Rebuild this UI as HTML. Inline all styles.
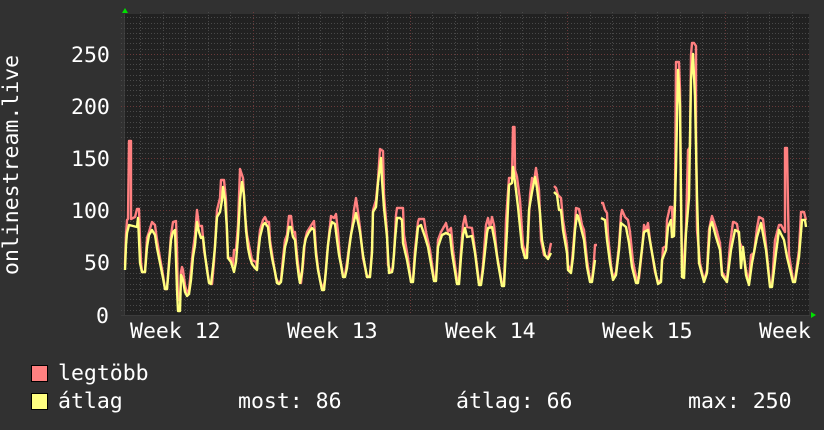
<!DOCTYPE html>
<html>
<head>
<meta charset="utf-8">
<style>
html,body{margin:0;padding:0;background:#313131;}
svg{display:block;}
text{font-family:"DejaVu Sans Mono","Liberation Mono",monospace;font-size:21.5px;fill:#fff;}
</style>
</head>
<body>
<svg width="824" height="430" viewBox="0 0 824 430" xmlns="http://www.w3.org/2000/svg">
<rect width="824" height="430" fill="#313131"/>
<rect x="125" y="14" width="684" height="302" fill="#212121"/>
<rect x="124" y="14" width="1" height="302" fill="#3a3a3a"/>
<g fill="none" stroke-width="1" stroke-dasharray="1 2">
<path stroke="#494949" d="M121 310.5H809M121 305.5H809M121 299.5H809M121 294.5H809M121 289.5H809M121 284.5H809M121 278.5H809M121 273.5H809M121 268.5H809M121 258.5H809M121 252.5H809M121 247.5H809M121 242.5H809M121 237.5H809M121 231.5H809M121 226.5H809M121 221.5H809M121 216.5H809M121 205.5H809M121 200.5H809M121 195.5H809M121 189.5H809M121 184.5H809M121 179.5H809M121 174.5H809M121 169.5H809M121 163.5H809M121 153.5H809M121 148.5H809M121 143.5H809M121 137.5H809M121 132.5H809M121 127.5H809M121 122.5H809M121 116.5H809M121 111.5H809M121 101.5H809M121 95.5H809M121 90.5H809M121 85.5H809M121 80.5H809M121 75.5H809M121 69.5H809M121 64.5H809M121 59.5H809M121 49.5H809M121 43.5H809M121 38.5H809M121 33.5H809M121 28.5H809M121 23.5H809M121 17.5H809"/>
<path stroke="#494949" d="M140.500 12V318M163.500 12V318M185.500 12V318M208.500 12V318M230.500 12V318M275.500 12V318M298.500 12V318M320.500 12V318M342.500 12V318M365.500 12V318M387.500 12V318M432.500 12V318M455.500 12V318M477.500 12V318M500.500 12V318M522.500 12V318M545.500 12V318M590.500 12V318M612.500 12V318M635.500 12V318M657.500 12V318M680.500 12V318M702.500 12V318M747.500 12V318M769.500 12V318M792.500 12V318"/>
<path stroke="#6a3a3a" d="M121 263.500H809M121 210.500H809M121 158.500H809M121 106.500H809M121 54.500H809M253.500 12V318M410.500 12V318M567.500 12V318M725.500 12V318"/>
</g>
<rect x="121" y="315" width="689" height="1" fill="#3c3c3c"/>

<g fill="none" stroke="#ff8080" stroke-width="2.4" stroke-linejoin="round">
<polyline points="125,265 126,235 127,220 128,219 129,141 131,141 131,219 135,217 137,209 139,209 140,240 141,262 142,272 145,272 147,238 149,232 152,222 155,225 157,240 160,258 163,275 165,289 167,289 169,262 171,235 173,222 176,221 177,250 178,300 180,300 181,272 182,267 183,270 185,285 187,293 189,290 191,270 193,250 195,235 197,210 199,226 202,226 204,250 207,268 209,282 212,284 214,262 215,245 217,210 220,198 221,180 224,180 226,200 227,235 228,258 231,258 233,265 234,250 236,250 238,225 240,169 243,178 245,215 247,235 250,250 252,260 256,262 257,268 258,250 260,230 263,220 265,217 267,222 269,222 270,240 273,260 276,278 279,284 281,280 283,258 285,240 287,235 289,216 291,216 293,232 295,232 297,255 299,272 301,283 303,265 305,240 307,232 312,224 314,221 316,250 318,268 320,280 323,290 325,280 327,255 329,235 331,216 334,218 336,214 338,232 340,258 343,275 345,275 347,262 350,240 352,228 354,210 356,198 358,212 360,228 363,258 367,277 370,275 372,250 373,210 376,200 378,180 380,149 383,151 384,195 387,232 388,265 390,270 392,272 394,255 396,215 397,208 403,208 404,235 408,258 411,282 413,280 415,250 418,222 419,219 424,219 426,232 430,250 434,278 436,279 438,240 441,232 445,225 446,223 448,232 451,228 453,250 457,280 459,280 461,250 463,225 465,216 467,227 472,228 475,250 479,282 481,282 483,265 486,225 488,218 490,228 492,217 494,225 497,255 502,284 504,284 506,220 509,178 512,178 513,127 514.5,127 515,170 517,177 520,200 523,245 526,255 528,240 530,195 532,178 534,182 536,168 539,190 541,240 544,255 548,258 551,243"/>
<polyline points="554,186 556,188 558,195 561,198 563,220 567,245 568,265 571,271 573,250 575,225 576,208 579,209 582,225 584,230 587,260 590,280 592,280 594,260 595,245 597,245"/>
<polyline points="601,203 603,203 605,210 607,213 608,235 611,265 613,278 616,272 619,245 621,215 622,210 625,217 628,220 630,232 633,262 637,281 639,278 642,250 644,225 646,230 648,223 650,240 655,272 658,282 661,280 663,248 666,246 667,220 670,207 672,207 673,235 675,200 676,62 679,62 680,90 681,200 682,270 684,260 686,228 688,150 690,147 691,55 692,43 694,43 696,46 696,127 697,230 700,263 704,281 707,270 709,230 711,220 712,216 716,228 720,243 722,272 727,280 730,245 733,222 734,222 737,224 740,243 743,250 746,270 749,283 751,255 754,253 757,228 759,217 763,219 766,245 770,285 772,285 775,240 779,225 781,225 785,232 785,148 787,148 788,205 789,255 793,280 795,280 799,250 801,212 804,212 806,220"/>
</g>

<g fill="none" stroke="#ffff80" stroke-width="2.4" stroke-linejoin="round">
<polyline points="125,270 126,245 127,233 129,225 133,226 137,227 138,218 139,240 140,263 142,272 145,272 147,247 149,235 152,230 155,235 157,248 160,263 163,278 165,289 167,289 169,265 171,240 173,232 175,230 176,260 177,290 178,311 180,311 181,275 183,280 185,292 187,296 189,294 191,280 193,257 195,245 197,222 199,232 201,238 203,237 205,255 207,270 209,283 211,284 213,267 215,247 217,217 220,212 222,200 223,187 225,200 227,230 228,258 231,262 234,272 236,262 238,237 240,200 242,182 244,195 246,230 248,248 250,258 252,264 255,268 257,270 258,255 260,237 263,225 265,223 268,227 270,245 272,258 275,272 277,283 279,284 281,282 283,265 285,247 287,240 289,227 291,227 293,237 295,240 297,262 299,278 300,283 302,272 304,247 306,238 309,232 312,228 314,230 316,255 318,270 320,280 322,290 324,290 326,270 328,245 330,230 332,222 335,224 337,240 339,255 341,265 343,277 345,277 347,268 349,250 351,235 353,225 356,213 358,222 360,232 363,255 367,277 370,277 372,253 373,212 376,207 378,183 381,158 382,180 384,208 387,237 389,273 392,272 393,267 395,240 397,218 400,218 402,220 403,243 407,260 411,282 413,282 415,257 418,227 421,225 425,237 428,247 434,281 436,281 438,247 442,235 446,233 450,235 452,253 457,284 459,284 461,257 463,235 465,228 467,237 472,236 475,253 479,285 481,285 483,270 487,233 488,228 492,227 495,243 498,263 502,286 504,286 507,230 509,185 512,183 513,167 515,182 518,207 522,247 525,258 527,258 529,210 532,192 535,177 537,188 540,213 542,240 545,255 548,259 551,253"/>
<polyline points="554,192 557,195 559,210 561,210 563,230 567,253 568,270 571,273 573,257 575,230 577,215 578,216 581,228 584,240 587,267 590,282 592,282 595,260"/>
<polyline points="601,218 605,220 607,240 610,263 613,280 616,275 619,250 621,223 626,227 629,243 632,267 636,283 638,283 641,257 644,232 648,230 651,247 656,275 658,284 661,282 662,260 666,250 668,227 671,220 672,237 674,236 676,168 678,70 680,105 681,197 682,277 684,278 686,233 689,198 691,80 693,54 695,97 697,197 699,263 704,282 707,273 710,227 712,222 716,237 720,250 722,275 727,282 731,250 735,230 739,232 741,268 743,247 746,275 749,285 752,263 757,237 761,223 766,250 770,287 772,287 776,253 779,230 784,240 787,257 793,282 795,282 799,257 802,220 805,220 806,227"/>
</g>

<polygon points="122,13 128,13 125,8" fill="#00e000"/>
<polygon points="811,312 816,315 811,318" fill="#00e000"/>

<text x="71" y="62">250</text>
<text x="71" y="114">200</text>
<text x="71" y="166">150</text>
<text x="71" y="218">100</text>
<text x="84" y="270">50</text>
<text x="96" y="323">0</text>

<text transform="translate(18,275) rotate(-90)">onlinestream.live</text>

<text x="130" y="338" xml:space="preserve">Week 12</text>
<text x="287" y="338" xml:space="preserve">Week 13</text>
<text x="445" y="338" xml:space="preserve">Week 14</text>
<text x="602" y="338" xml:space="preserve">Week 15</text>
<text x="759" y="338">Week</text>

<rect x="31.500" y="365.500" width="16" height="16" fill="#ff8080" stroke="#000"/>
<rect x="31.500" y="393.500" width="16" height="16" fill="#ffff80" stroke="#000"/>
<text x="58" y="380">legtöbb</text>
<text x="58" y="408">átlag</text>
<text x="238" y="408">most: 86</text>
<text x="456" y="408">átlag: 66</text>
<text x="688" y="408">max: 250</text>
</svg>
</body>
</html>
